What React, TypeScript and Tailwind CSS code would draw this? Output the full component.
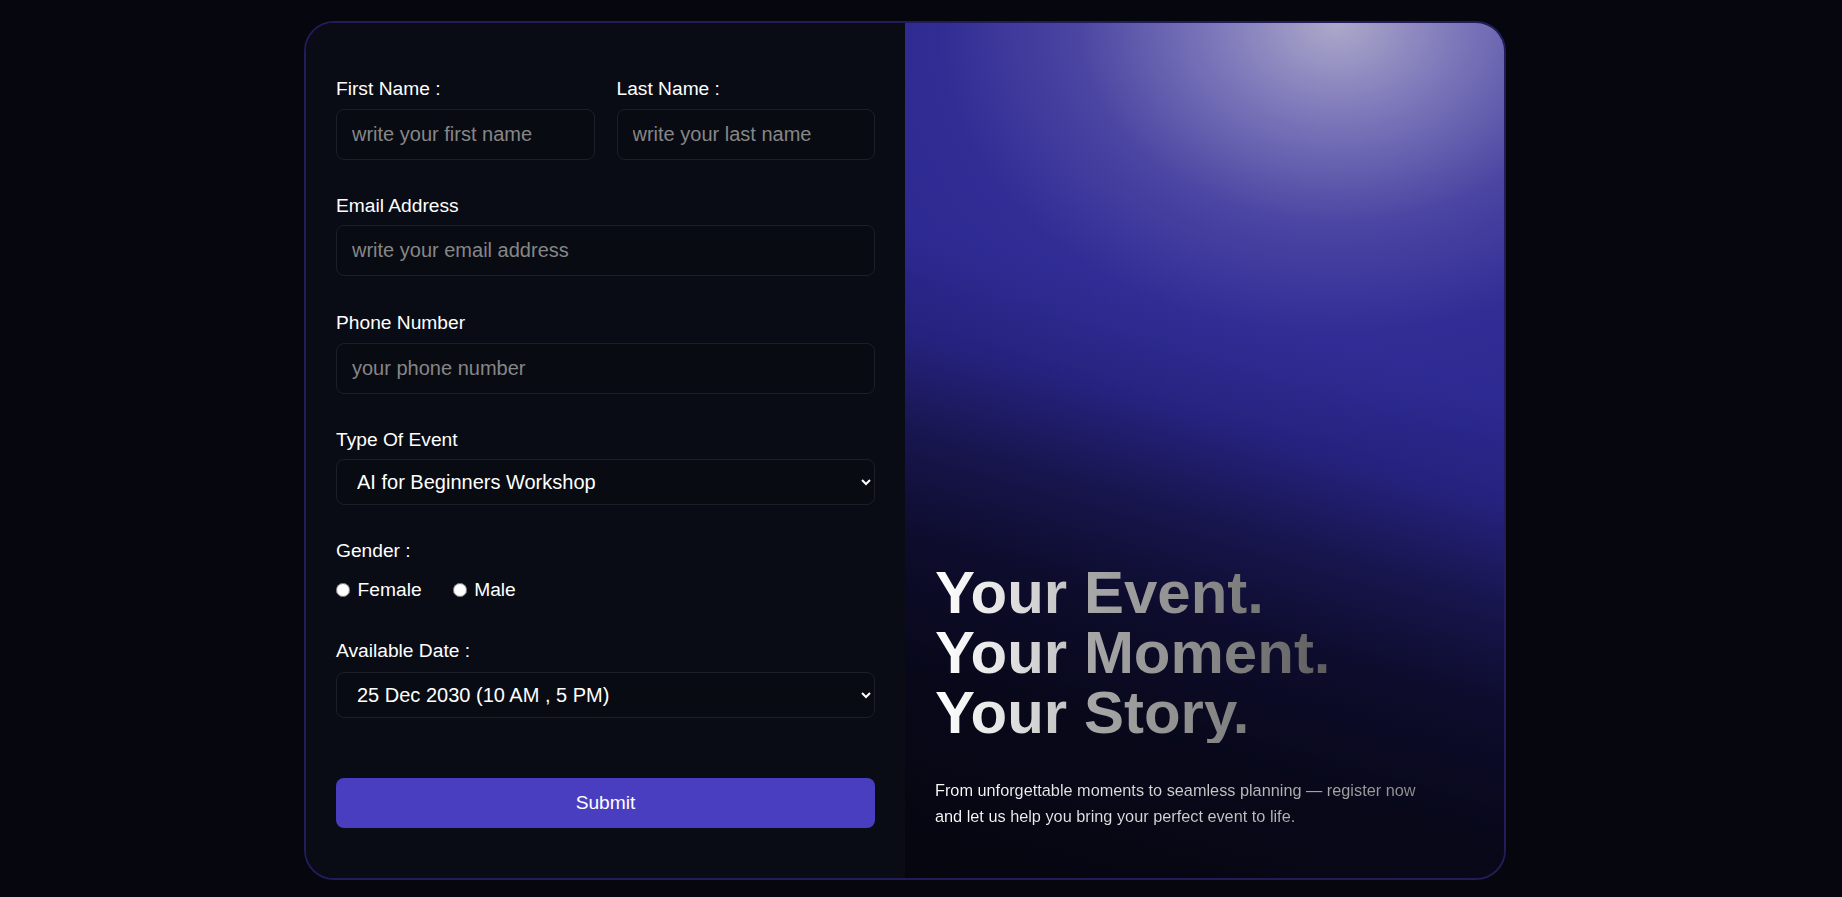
import React from "react";

const font = { fontFamily: '"Liberation Sans", Arial, sans-serif' };

function Label({ children }: { children: React.ReactNode }) {
  return (
    <label className="block text-[19.2px] leading-[22px] text-white">{children}</label>
  );
}

const inputCls =
  "mt-[8.5px] block h-[51px] w-full rounded-[8px] border border-[#1c1f28] bg-[#090b13] px-[15px] text-[20px] text-white outline-none placeholder:text-[#868686]";

const selectCls =
  "block h-[46px] w-full rounded-[8px] border border-[#1c1f28] bg-[#090b13] pl-[16px] pr-[8px] text-[20px] text-white outline-none";

export default function App() {
  return (
    <div className="min-h-screen bg-[#06060e] pt-[21px] pl-[304px]" style={font}>
      <div className="flex w-[1202px] overflow-hidden rounded-[30px] border-2 border-[#211d58]">
        {/* left: form */}
        <form className="flex w-1/2 flex-col bg-[#0a0c15] pl-[30px] pr-[30px] pt-[55px] pb-[50px]">
          <div className="grid grid-cols-2 gap-x-[22px]">
            <div>
              <Label>First Name :</Label>
              <input className={inputCls} placeholder="write your first name" />
            </div>
            <div>
              <Label>Last Name :</Label>
              <input className={inputCls} placeholder="write your last name" />
            </div>
          </div>

          <div className="mt-[35px]">
            <Label>Email Address</Label>
            <input className={inputCls} placeholder="write your email address" />
          </div>

          <div className="mt-[36px]">
            <Label>Phone Number</Label>
            <input className={inputCls} placeholder="your phone number" />
          </div>

          <div className="mt-[35px]">
            <Label>Type Of Event</Label>
            <select className={selectCls + " mt-[8.7px]"} defaultValue="ai">
              <option value="ai" className="bg-[#0a0c15]">AI for Beginners Workshop</option>
              <option value="web" className="bg-[#0a0c15]">Web Development Bootcamp</option>
            </select>
          </div>

          <div className="mt-[34.6px]">
            <Label>Gender :</Label>
            <div className="mt-[17.4px] flex h-[22px] items-center gap-x-[31px] text-[19.2px] leading-[22px] text-white">
              <label className="flex items-center gap-x-[7.6px]">
                <input type="radio" name="gender" className="m-0 h-[14px] w-[14px]" />
                Female
              </label>
              <label className="flex items-center gap-x-[7.6px]">
                <input type="radio" name="gender" className="m-0 h-[14px] w-[14px]" />
                Male
              </label>
            </div>
          </div>

          <div className="mt-[38.7px]">
            <Label>Available Date :</Label>
            <select className={selectCls + " mt-[9.7px]"} defaultValue="d1">
              <option value="d1" className="bg-[#0a0c15]">25 Dec 2030 (10 AM , 5 PM)</option>
              <option value="d2" className="bg-[#0a0c15]">26 Dec 2030 (10 AM , 5 PM)</option>
            </select>
          </div>

          <button
            type="button"
            className="mt-[60.7px] h-[49.5px] w-full rounded-[8px] bg-[#4a3ec0] text-[19.2px] text-white"
          >
            Submit
          </button>
        </form>

        {/* right: hero */}
        <div className="flex w-1/2 flex-col justify-end bg-[radial-gradient(ellipse_540px_420px_at_72%_0%,rgba(172,169,202,1)_0%,rgba(140,135,194,0.85)_22%,rgba(100,93,178,0.55)_48%,rgba(65,58,162,0.22)_74%,rgba(45,41,144,0)_100%),linear-gradient(196deg,#2c288c_0%,#2d2992_36%,#25227e_47%,#17154c_57%,#0d0c2c_67%,#08081a_80%,#06060f_100%)] px-[30px] pb-[49px]">
          <h1 className="w-fit bg-[linear-gradient(90deg,#ffffff_0%,#e6e6e6_16%,#c4c4c4_33%,#a9a9a9_37%,#8a8a8a_68%,#5c5c5c_100%)] bg-clip-text text-[60px] font-bold leading-[60px] text-transparent">
            Your Event.
            <br />
            Your Moment.
            <br />
            Your Story.
          </h1>
          <p className="mt-[34px] w-[495px] bg-[linear-gradient(90deg,#ffffff_0%,#d6d6d6_45%,#8a8a8a_100%)] bg-clip-text text-[16.3px] leading-[26px] text-transparent">
            From unforgettable moments to seamless planning — register now and let us help you bring
            your perfect event to life.
          </p>
        </div>
      </div>
    </div>
  );
}
